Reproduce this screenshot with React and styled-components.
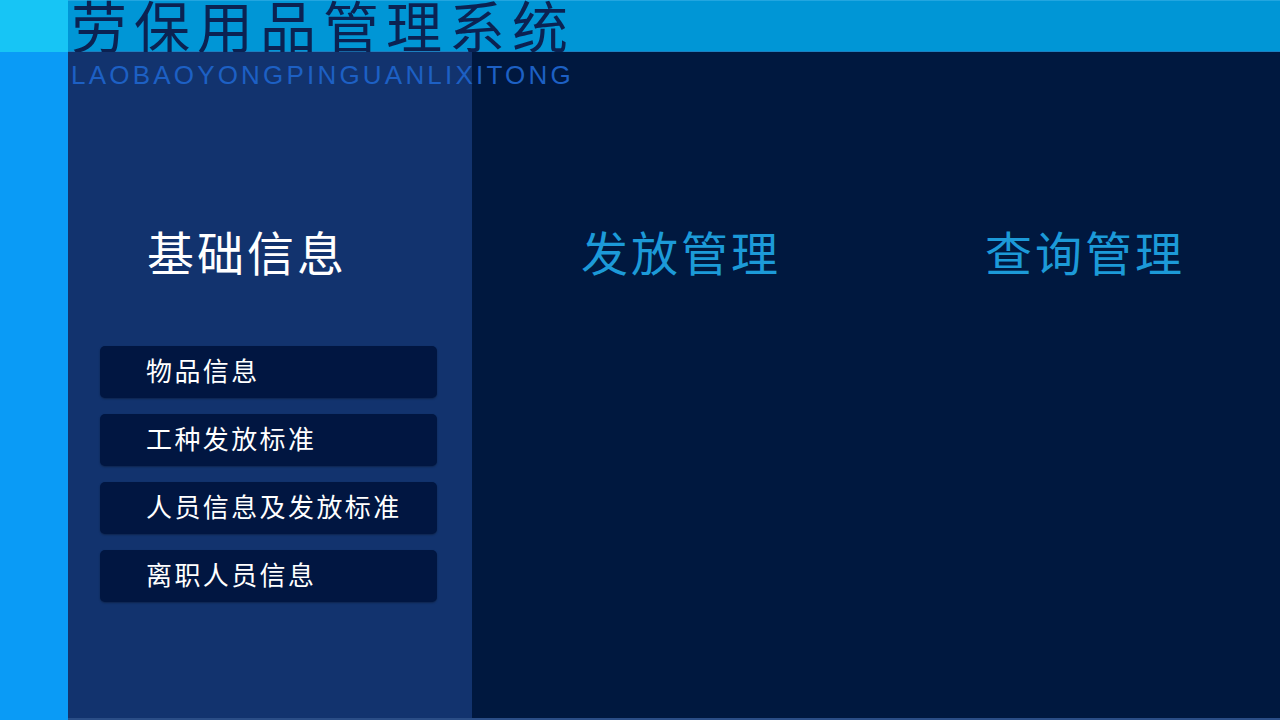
import styled, { createGlobalStyle } from 'styled-components'

const GlobalStyle = createGlobalStyle`
  html, body {
    margin: 0;
    padding: 0;
    background: #00183f;
  }
  body {
    font-family: "Noto Sans CJK SC", "Noto Sans", sans-serif;
  }
`

const menu = ['物品信息', '工种发放标准', '人员信息及发放标准', '离职人员信息']

const App = () => {
  return (
    <>
      <GlobalStyle />
      <Page>
        <Strip>
          <div className="strip-top" />
          <div className="strip-bottom" />
        </Strip>
        <Main>
          <Header>
            <Title>劳保用品管理系统</Title>
          </Header>
          <Body>
            <Subtitle>LAOBAOYONGPINGUANLIXITONG</Subtitle>
            <Column $panel>
              <Heading $light $indent={79}>基础信息</Heading>
              <Menu>
                {menu.map((item) => (
                  <MenuButton key={item}>{item}</MenuButton>
                ))}
              </Menu>
            </Column>
            <Column>
              <Heading $indent={109}>发放管理</Heading>
            </Column>
            <Column>
              <Heading $indent={109}>查询管理</Heading>
            </Column>
          </Body>
        </Main>
      </Page>
    </>
  )
}

export default App

const Page = styled.div`
  width: 1280px;
  height: 720px;
  display: grid;
  grid-template-columns: 68px 1fr;
  overflow: hidden;
  background: #00183f;
`

const Strip = styled.div`
  display: grid;
  grid-template-rows: 52px 1fr;
  .strip-top {
    background: #17c5f5;
  }
  .strip-bottom {
    background: #0a9bf6;
  }
`

const Main = styled.div`
  display: grid;
  grid-template-rows: 52px 1fr;
  min-width: 0;
`

const Header = styled.div`
  background: #0096d6;
  border-top: 1px solid #22a6e0;
  border-bottom: 1px solid #1c7fc0;
  box-sizing: border-box;
  display: flex;
  align-items: center;
  padding-left: 3px;
`

const Title = styled.h1`
  margin: 0;
  font-family: "Noto Sans CJK SC", sans-serif;
  font-weight: 400;
  font-size: 56px;
  line-height: 52px;
  letter-spacing: 7px;
  color: #0b2252;
  white-space: nowrap;
  margin-top: -5px;
`

const Body = styled.div`
  position: relative;
  display: grid;
  grid-template-columns: 404px 404px 1fr;
  border-bottom: 2px solid #2a4d86;
`

const Subtitle = styled.div`
  position: absolute;
  left: 3px;
  top: 10px;
  font-family: "Liberation Sans", Arial, sans-serif;
  font-size: 26px;
  line-height: 26px;
  letter-spacing: 3.2px;
  color: #1d60c4;
  white-space: nowrap;
`

const Column = styled.div`
  background: ${(p) => (p.$panel ? '#12336e' : '#00183f')};
  display: flex;
  flex-direction: column;
  padding-top: 174px;
`

const Heading = styled.h2`
  margin: 0;
  padding-left: ${(p) => p.$indent}px;
  font-family: "Noto Sans CJK SC", sans-serif;
  font-weight: 400;
  font-size: 47px;
  line-height: 50px;
  letter-spacing: 3px;
  color: ${(p) => (p.$light ? '#ffffff' : '#1c9ad8')};
`

const Menu = styled.div`
  display: flex;
  flex-direction: column;
  gap: 16px;
  margin-top: 70px;
  padding-left: 32px;
`

const MenuButton = styled.div`
  width: 337px;
  height: 52px;
  box-sizing: border-box;
  display: flex;
  align-items: center;
  padding-left: 46px;
  padding-bottom: 6px;
  background: #011641;
  border-radius: 5px;
  box-shadow: 0 1px 2px rgba(0, 0, 0, 0.3);
  font-family: "Noto Sans CJK SC", sans-serif;
  font-size: 26px;
  letter-spacing: 2.4px;
  color: #ffffff;
  cursor: pointer;
`
